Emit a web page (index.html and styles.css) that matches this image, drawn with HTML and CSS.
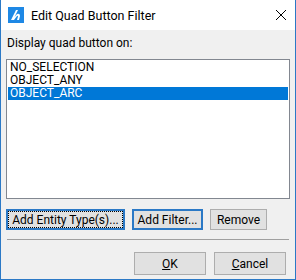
FILE: index.html
```html
<!DOCTYPE html>
<html lang="en">
<head>
  <meta charset="UTF-8">
  <title>Edit Quad Button Filter</title>
  <link rel="stylesheet" href="styles.css">
</head>
<body>
  <div class="window">
    <div class="titlebar">
      <svg class="app-icon" width="16" height="16" viewBox="0 0 16 16">
        <rect width="16" height="16" fill="#1e88e5"/>
        <path d="M3 13 L8 3 L10 3 L6.5 10 L9 7 Q12 6 12 9 L11 13 L9 13 L10 9.5 Q10 8.5 9 9 L6 13 Z" fill="#fff"/>
      </svg>
      <span class="title">Edit Quad Button Filter</span>
      <svg class="close" width="12" height="12" viewBox="0 0 12 12">
        <path d="M1 1 L11 11 M11 1 L1 11" stroke="#000" stroke-width="1"/>
      </svg>
    </div>
    <div class="client">
      <div class="label">Display quad button on:</div>
      <div class="listbox">
        <div class="item">NO_SELECTION</div>
        <div class="item">OBJECT_ANY</div>
        <div class="item selected">OBJECT_ARC</div>
      </div>
      <div class="row">
        <button class="btn focused btn-entity">Add Entity Type(s)...</button>
        <button class="btn default btn-filter">Add Filter...</button>
        <button class="btn btn-remove">Remove</button>
      </div>
      <div class="separator"></div>
      <div class="row footer">
        <button class="btn"><u>O</u>K</button>
        <button class="btn"><u>C</u>ancel</button>
      </div>
    </div>
  </div>
</body>
</html>
```
FILE: styles.css
```css
* {
  box-sizing: border-box;
}

body {
  margin: 0;
  width: 296px;
  height: 280px;
  font-family: Roboto, "Noto Sans", sans-serif;
  font-size: 12px;
  color: #000;
  overflow: hidden;
}

.window {
  display: flex;
  flex-direction: column;
  width: 296px;
  height: 280px;
  border: 1px solid #2b79c6;
  border-top: none;
  background-color: #f0f0f0;
}

.titlebar {
  display: flex;
  align-items: center;
  height: 30px;
  padding: 0 7px 0 7px;
  background-color: #fff;
}

.app-icon {
  margin-right: 7px;
}

.title {
  flex-grow: 1;
  font-size: 12.5px;
}

.close {
  margin-right: 1px;
}

.client {
  display: flex;
  flex-direction: column;
  flex-grow: 1;
  padding: 4px 5px 0 5px;
}

.label {
  height: 25px;
  line-height: 18px;
  padding-left: 1px;
}

.listbox {
  height: 140px;
  padding: 1px;
  border: 1px solid #828790;
  background-color: #fff;
}

.item {
  height: 13px;
  line-height: 13px;
  padding-left: 2px;
  white-space: nowrap;
}

.selected {
  background-color: #0078d7;
  color: #fff;
}

.row {
  display: flex;
  gap: 7px;
  margin-top: 10px;
}

.btn {
  height: 21px;
  padding: 0;
  font-family: inherit;
  font-size: 12px;
  color: #000;
  background-color: #e1e1e1;
  border: 1px solid #adadad;
}

.btn-entity {
  width: 119px;
}

.btn-filter {
  width: 71px;
}

.btn-remove {
  width: 57px;
}

.default {
  border: 2px solid #2b79c6;
}

.focused {
  border: 2px solid #2b79c6;
  outline: 1px dotted #000;
  outline-offset: -3px;
}

.separator {
  height: 1px;
  margin: 9px 1px 0 1px;
  background-color: #a0a0a0;
}

.footer {
  justify-content: flex-end;
  gap: 8px;
  margin-top: 12px;
  padding-right: 4px;
}

.footer .btn {
  width: 72px;
  height: 23px;
}
```
